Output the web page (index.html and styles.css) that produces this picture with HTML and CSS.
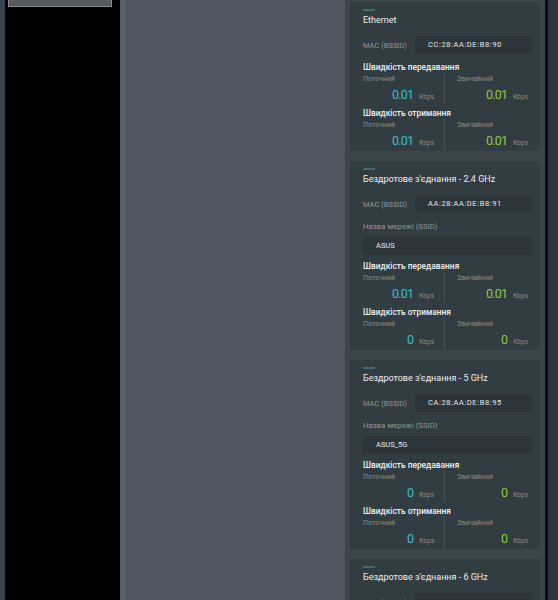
FILE: index.html
```html
<!DOCTYPE html>
<html lang="uk">
<head>
    <meta charset="UTF-8">
    <title>Мережа</title>
    <link rel="stylesheet" href="styles.css">
</head>
<body>
    <div class="edge-left"></div>
    <div class="sidebar">
        <div class="side-button"></div>
    </div>
    <div class="content"></div>
    <div class="panel">
        <!-- Ethernet -->
        <div class="card">
            <div class="accent"></div>
            <div class="card-title">Ethernet</div>
            <div class="mac-row">
                <span class="mac-label">MAC (BSSID)</span>
                <span class="mac-value">CC:28:AA:DE:B8:90</span>
            </div>
            <div class="speed-title">Швидкість передавання</div>
            <div class="speed-row">
                <div class="speed-col">
                    <div class="speed-label">Поточний</div>
                    <div class="speed-value"><span class="num cur">0.01</span><span class="unit">Kbps</span></div>
                </div>
                <div class="speed-col">
                    <div class="speed-label">Звичайний</div>
                    <div class="speed-value"><span class="num avg">0.01</span><span class="unit">Kbps</span></div>
                </div>
            </div>
            <div class="speed-title">Швидкість отримання</div>
            <div class="speed-row">
                <div class="speed-col">
                    <div class="speed-label">Поточний</div>
                    <div class="speed-value"><span class="num cur">0.01</span><span class="unit">Kbps</span></div>
                </div>
                <div class="speed-col">
                    <div class="speed-label">Звичайний</div>
                    <div class="speed-value"><span class="num avg">0.01</span><span class="unit">Kbps</span></div>
                </div>
            </div>
        </div>

        <!-- 2.4 GHz -->
        <div class="card">
            <div class="accent"></div>
            <div class="card-title">Бездротове з'єднання - 2.4 GHz</div>
            <div class="mac-row">
                <span class="mac-label">MAC (BSSID)</span>
                <span class="mac-value">AA:28:AA:DE:B8:91</span>
            </div>
            <div class="ssid-label">Назва мережі (SSID)</div>
            <div class="ssid-value">ASUS</div>
            <div class="speed-title">Швидкість передавання</div>
            <div class="speed-row">
                <div class="speed-col">
                    <div class="speed-label">Поточний</div>
                    <div class="speed-value"><span class="num cur">0.01</span><span class="unit">Kbps</span></div>
                </div>
                <div class="speed-col">
                    <div class="speed-label">Звичайний</div>
                    <div class="speed-value"><span class="num avg">0.01</span><span class="unit">Kbps</span></div>
                </div>
            </div>
            <div class="speed-title">Швидкість отримання</div>
            <div class="speed-row">
                <div class="speed-col">
                    <div class="speed-label">Поточний</div>
                    <div class="speed-value"><span class="num cur">0</span><span class="unit">Kbps</span></div>
                </div>
                <div class="speed-col">
                    <div class="speed-label">Звичайний</div>
                    <div class="speed-value"><span class="num avg">0</span><span class="unit">Kbps</span></div>
                </div>
            </div>
        </div>

        <!-- 5 GHz -->
        <div class="card">
            <div class="accent"></div>
            <div class="card-title">Бездротове з'єднання - 5 GHz</div>
            <div class="mac-row">
                <span class="mac-label">MAC (BSSID)</span>
                <span class="mac-value">CA:28:AA:DE:B8:95</span>
            </div>
            <div class="ssid-label">Назва мережі (SSID)</div>
            <div class="ssid-value">ASUS_5G</div>
            <div class="speed-title">Швидкість передавання</div>
            <div class="speed-row">
                <div class="speed-col">
                    <div class="speed-label">Поточний</div>
                    <div class="speed-value"><span class="num cur">0</span><span class="unit">Kbps</span></div>
                </div>
                <div class="speed-col">
                    <div class="speed-label">Звичайний</div>
                    <div class="speed-value"><span class="num avg">0</span><span class="unit">Kbps</span></div>
                </div>
            </div>
            <div class="speed-title">Швидкість отримання</div>
            <div class="speed-row">
                <div class="speed-col">
                    <div class="speed-label">Поточний</div>
                    <div class="speed-value"><span class="num cur">0</span><span class="unit">Kbps</span></div>
                </div>
                <div class="speed-col">
                    <div class="speed-label">Звичайний</div>
                    <div class="speed-value"><span class="num avg">0</span><span class="unit">Kbps</span></div>
                </div>
            </div>
        </div>

        <!-- 6 GHz -->
        <div class="card">
            <div class="accent"></div>
            <div class="card-title">Бездротове з'єднання - 6 GHz</div>
            <div class="mac-row">
                <span class="mac-label">MAC (BSSID)</span>
                <span class="mac-value"></span>
            </div>
        </div>
    </div>
    <div class="edge-right"></div>
</body>
</html>
```

FILE: styles.css
```css
html, body {
    height: 100%;
}
body {
    margin: 0;
    display: flex;
    overflow: hidden;
    font-family: Roboto, "Noto Sans", sans-serif;
    background: #000;
}
.edge-left {
    width: 5px;
    background: #39434a;
}
.sidebar {
    width: 115px;
    background: #000;
}
.side-button {
    margin: 0 8px 0 3px;
    height: 6px;
    background: #565a5c;
    border: 1px solid #8a8e90;
    border-top: none;
}
.content {
    width: 219px;
    background: #4e575f;
    border-left: 6px solid #56606a;
}
.panel {
    width: 190px;
    padding: 2px 5px 0;
    background: #3b454c;
    border-right: 3px solid #0c1014;
    display: flex;
    flex-direction: column;
    gap: 10px;
}
.edge-right {
    flex: 1;
    background: #2b3640;
}

/* cards */
.card {
    background: #323c43;
    padding: 7px 8px 1px 13px;
    flex-shrink: 0;
}
.accent {
    width: 12px;
    height: 2px;
    background: #3c6e7a;
}
.card-title {
    margin-top: 3px;
    font-size: 9px;
    line-height: 12px;
    color: #eef0f1;
}
.mac-row {
    margin-top: 10px;
    display: flex;
    align-items: center;
    height: 18px;
}
.mac-label {
    width: 52px;
    font-size: 7.5px;
    color: #8c969b;
}
.mac-value {
    flex: 1;
    height: 18px;
    line-height: 18px;
    padding-left: 13px;
    background: #2b353b;
    font-size: 7.5px;
    letter-spacing: 0.6px;
    color: #e6e9ea;
}
.ssid-label {
    margin-top: 8px;
    font-size: 7.8px;
    line-height: 12px;
    color: #8c969b;
}
.ssid-value {
    margin-top: 4px;
    height: 18px;
    line-height: 18px;
    padding-left: 13px;
    background: #2b353b;
    font-size: 7.5px;
    color: #e6e9ea;
}
.speed-title {
    margin-top: 3px;
    font-size: 8.4px;
    line-height: 12px;
    font-weight: 500;
    color: #eef0f1;
}
.mac-row + .speed-title {
    margin-top: 7px;
}
.ssid-value + .speed-title {
    margin-top: 5px;
}
.speed-row {
    display: grid;
    grid-template-columns: 81px 1fr;
}
.speed-col {
    padding-right: 10px;
}
.speed-col + .speed-col {
    border-left: 1px solid #47525a;
    padding-left: 12px;
    padding-right: 4px;
}
.speed-label {
    font-size: 7px;
    line-height: 13px;
    color: #858f94;
}
.speed-value {
    display: flex;
    justify-content: flex-end;
    align-items: baseline;
    height: 18px;
    line-height: 18px;
    gap: 6px;
}
.num {
    font-size: 12.5px;
    letter-spacing: -0.8px;
}
.num.cur {
    color: #3fbfc8;
}
.num.avg {
    color: #8ecb45;
}
.unit {
    font-size: 6.5px;
    line-height: 10px;
    color: #848e93;
}
```
